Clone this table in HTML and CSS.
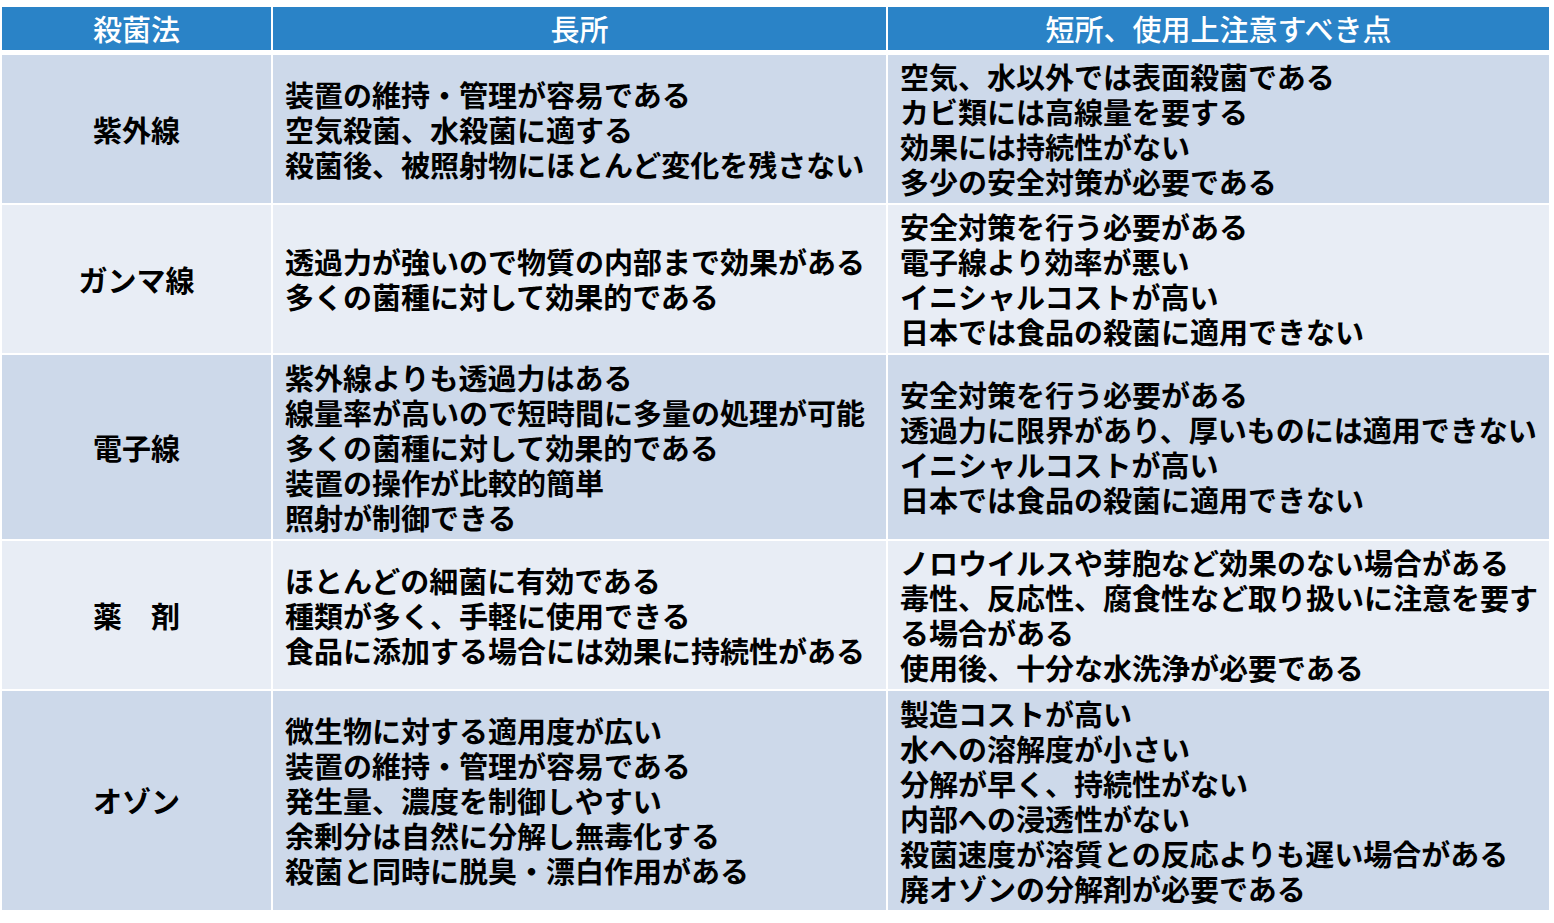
FILE: index.html
```html
<!DOCTYPE html>
<html lang="ja">
<head>
<meta charset="utf-8">
<title>殺菌法</title>
<link rel="stylesheet" href="styles.css">
</head>
<body>
<div class="page">
  <div class="grid head">
    <div class="hc">殺菌法</div>
    <div class="hc">長所</div>
    <div class="hc">短所、使用上注意すべき点</div>
  </div>
  <div class="grid body">
    <div class="c name odd">紫外線</div>
    <div class="c odd">装置の維持・管理が容易である<br>空気殺菌、水殺菌に適する<br>殺菌後、被照射物にほとんど変化を残さない</div>
    <div class="c odd">空気、水以外では表面殺菌である<br>カビ類には高線量を要する<br>効果には持続性がない<br>多少の安全対策が必要である</div>

    <div class="c name even">ガンマ線</div>
    <div class="c even">透過力が強いので物質の内部まで効果がある<br>多くの菌種に対して効果的である</div>
    <div class="c even">安全対策を行う必要がある<br>電子線より効率が悪い<br>イニシャルコストが高い<br>日本では食品の殺菌に適用できない</div>

    <div class="c name odd">電子線</div>
    <div class="c odd">紫外線よりも透過力はある<br>線量率が高いので短時間に多量の処理が可能<br>多くの菌種に対して効果的である<br>装置の操作が比較的簡単<br>照射が制御できる</div>
    <div class="c odd">安全対策を行う必要がある<br>透過力に限界があり、厚いものには適用できない<br>イニシャルコストが高い<br>日本では食品の殺菌に適用できない</div>

    <div class="c name even">薬　剤</div>
    <div class="c even">ほとんどの細菌に有効である<br>種類が多く、手軽に使用できる<br>食品に添加する場合には効果に持続性がある</div>
    <div class="c even">ノロウイルスや芽胞など効果のない場合がある<br>毒性、反応性、腐食性など取り扱いに注意を要する場合がある<br>使用後、十分な水洗浄が必要である</div>

    <div class="c name odd">オゾン</div>
    <div class="c odd">微生物に対する適用度が広い<br>装置の維持・管理が容易である<br>発生量、濃度を制御しやすい<br>余剰分は自然に分解し無毒化する<br>殺菌と同時に脱臭・漂白作用がある</div>
    <div class="c odd">製造コストが高い<br>水への溶解度が小さい<br>分解が早く、持続性がない<br>内部への浸透性がない<br>殺菌速度が溶質との反応よりも遅い場合がある<br>廃オゾンの分解剤が必要である</div>
  </div>
</div>
</body>
</html>
```

FILE: styles.css
```css
html, body {
  margin: 0;
  padding: 0;
  background: #ffffff;
}
body {
  font-family: "Noto Sans CJK JP", "Noto Sans", sans-serif;
  color: #000;
}
.page {
  padding: 7px 0 0 2px;
}
.grid {
  display: grid;
  grid-template-columns: 269px 613px 661px;
  column-gap: 2px;
  width: 1547px;
}
.head {
  grid-template-rows: 43px;
  margin-bottom: 5px;
}
.body {
  grid-template-rows: 148px 148px 184px 148px 219px;
  row-gap: 2px;
}
.hc {
  background: #2a83c7;
  color: #fff;
  font-size: 29px;
  font-weight: 500;
  display: flex;
  align-items: center;
  justify-content: center;
  line-height: 1;
}
.c {
  font-size: 29px;
  font-weight: 700;
  line-height: 35px;
  padding: 0 8px 0 12px;
  display: block;
  align-content: center;
}
.name {
  text-align: center;
  padding: 0;
}
.odd { background: #cdd9ea; }
.even { background: #e8edf5; }
```
